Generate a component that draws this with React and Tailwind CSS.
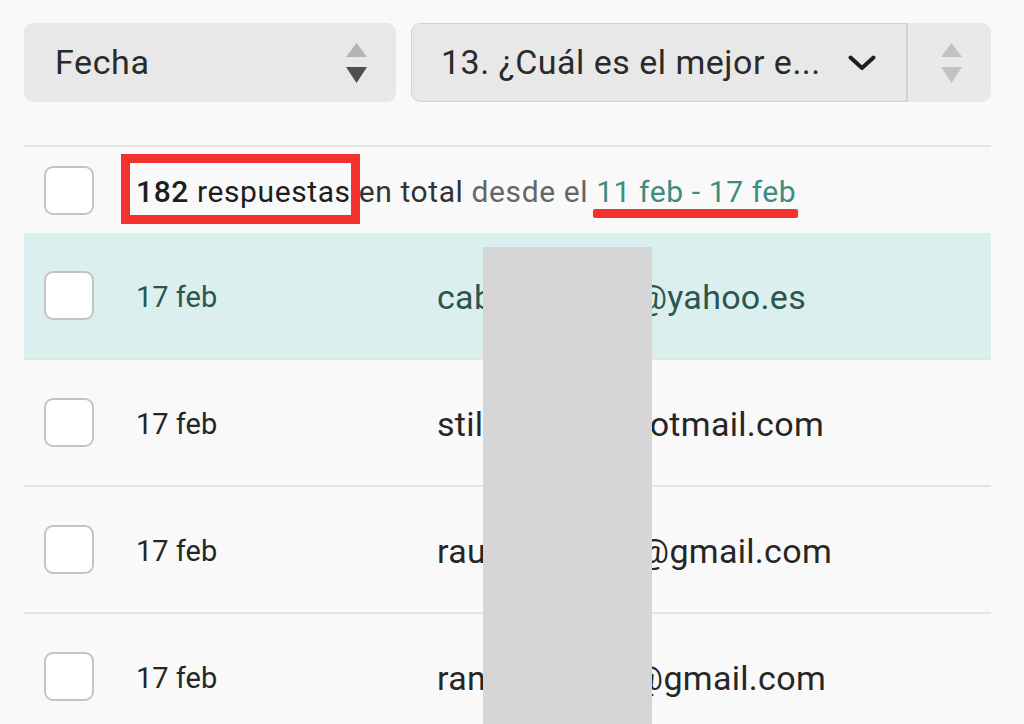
import React from "react";

const font = { fontFamily: "Roboto, 'Liberation Sans', sans-serif" };

function Stepper({ up, down }) {
  return (
    <svg width="21" height="40" viewBox="0 0 21 40" className="block">
      <polygon points="10.5,0 21,14 0,14" fill={up} />
      <polygon points="0,24 21,24 10.5,40" fill={down} />
    </svg>
  );
}

function Check() {
  return (
    <div className="w-[50px] h-[49px] shrink-0 rounded-[9px] border-2 border-[#c4c4c4] bg-white" />
  );
}

const rows = [
  { a: "cab", b: "@yahoo.es", w: "w-[369px]", hi: true },
  { a: "stil", b: "otmail.com", w: "w-[387px]" },
  { a: "rau", b: "@gmail.com", w: "w-[395px]" },
  { a: "ran", b: "@gmail.com", w: "w-[389px]" },
];

export default function App() {
  return (
    <div
      className="relative w-[1024px] h-[724px] overflow-hidden bg-[#f9f9f9]"
      style={font}
    >
      <div className="px-[24px] pt-[23px] w-[1015px]">
        {/* selects */}
        <div className="flex gap-[15px] h-[79px]">
          <div className="w-[372px] h-full rounded-[9px] bg-[#e8e8e8] flex items-center justify-between pl-[31px] pr-[29px]">
            <span className="text-[34px] text-[#2a2a2a] tracking-[0.6px]">Fecha</span>
            <Stepper up="#b4b4b4" down="#4f4f4f" />
          </div>
          <div className="flex-1 h-full flex">
            <div className="flex-1 h-full rounded-l-[9px] border-[1.5px] border-r-[2.5px] border-[#d2d2d2] bg-[#e8e8e8] flex items-center justify-between pl-[29px] pr-[30px]">
              <span className="text-[34px] text-[#2a2a2a] tracking-[0.5px] whitespace-nowrap">13. ¿Cuál es el mejor e...</span>
              <svg width="28" height="16" viewBox="0 0 28 16" className="block shrink-0">
                <polyline points="2.5,2.5 14,13 25.5,2.5" fill="none" stroke="#1f1f1f" strokeWidth="4" strokeLinecap="round" strokeLinejoin="round" />
              </svg>
            </div>
            <div className="w-[83px] h-full rounded-r-[9px] bg-[#e9e9e9] flex items-center justify-center pl-[3px]">
              <Stepper up="#c2c2c2" down="#c2c2c2" />
            </div>
          </div>
        </div>

        {/* list */}
        <div className="mt-[43px] border-t-2 border-[#e6e6e6]">
          <div className="h-[86px] flex items-center pl-[20px]">
            <Check />
            <div className="ml-[42px] pt-[2px] text-[30px] tracking-[0.6px] whitespace-nowrap">
              <span className="text-[#1e1e1e]"><span className="font-medium">182</span> respuestas</span>
              <span className="text-[#333]"> en total </span>
              <span className="text-[#666]">desde el </span>
              <span className="text-[#3e8b81]">11 feb - 17 feb</span>
            </div>
          </div>
          {rows.map((r, i) => (
            <div
              key={i}
              className={
                "h-[127px] flex items-center pl-[20px] border-b-2 border-[#e4e4e4] " +
                (r.hi ? "bg-[#dcefef] text-[#2b5650]" : "text-[#262626]")
              }
            >
              <Check />
              <span className="ml-[42px] w-[301px] pt-[4px] text-[29px]">17 feb</span>
              <span className={"flex justify-between pt-[3px] text-[34px] tracking-[0.3px] whitespace-nowrap " + r.w}>
                <span>{r.a}</span>
                <span>{r.b}</span>
              </span>
            </div>
          ))}
        </div>
      </div>

      {/* redaction */}
      <div className="absolute left-[483px] top-[247px] w-[169px] h-[477px] bg-[#d6d6d6]" />
      {/* annotations */}
      <div className="absolute left-[121px] top-[154px] w-[239px] h-[70px] border-[9px] border-[#f3312f]" />
      <div className="absolute left-[593px] top-[209px] w-[205px] h-[9px] rounded-[2px] bg-[#f3312f]" />
    </div>
  );
}
